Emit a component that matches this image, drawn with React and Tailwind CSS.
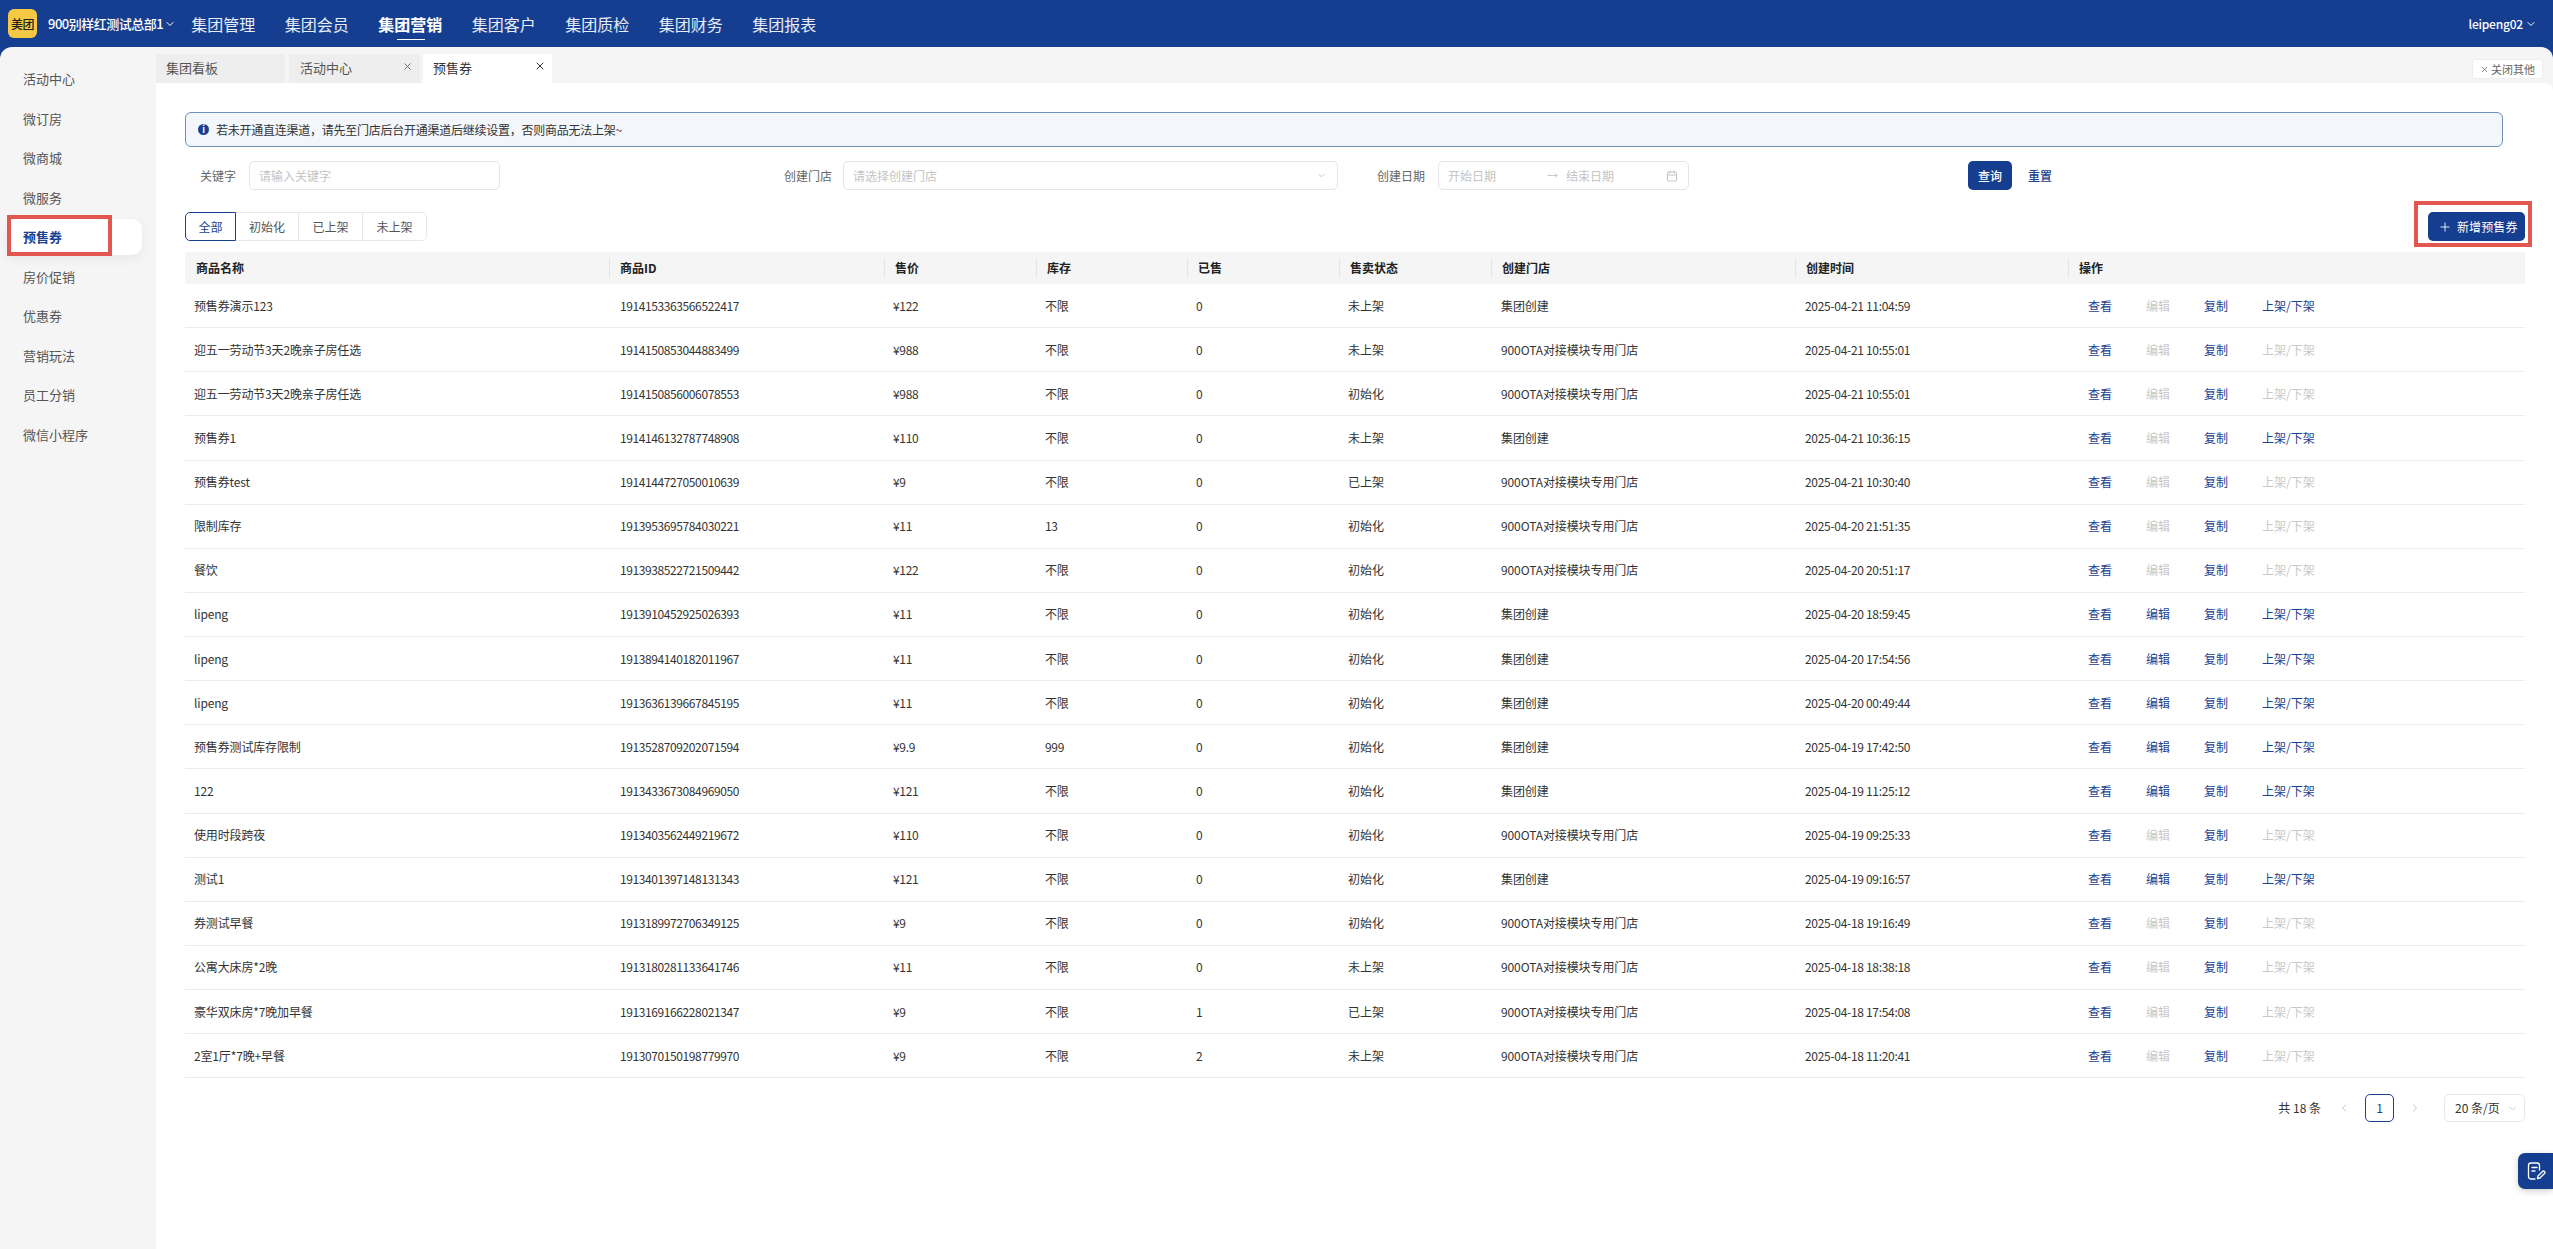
import React from "react";
import { ChevronDown, ChevronLeft, ChevronRight, X, Plus, Calendar, MoveRight } from "lucide-react";

const nav = ["集团管理", "集团会员", "集团营销", "集团客户", "集团质检", "集团财务", "集团报表"];
const side = ["活动中心", "微订房", "微商城", "微服务", "预售券", "房价促销", "优惠券", "营销玩法", "员工分销", "微信小程序"];
const G = "集团创建";
const O = "900OTA对接模块专用门店";
const rows = [
  ["预售券演示123", "1914153363566522417", "¥122", "不限", "0", "未上架", G, "2025-04-21 11:04:59", 0, 1],
  ["迎五一劳动节3天2晚亲子房任选", "1914150853044883499", "¥988", "不限", "0", "未上架", O, "2025-04-21 10:55:01", 0, 0],
  ["迎五一劳动节3天2晚亲子房任选", "1914150856006078553", "¥988", "不限", "0", "初始化", O, "2025-04-21 10:55:01", 0, 0],
  ["预售券1", "1914146132787748908", "¥110", "不限", "0", "未上架", G, "2025-04-21 10:36:15", 0, 1],
  ["预售券test", "1914144727050010639", "¥9", "不限", "0", "已上架", O, "2025-04-21 10:30:40", 0, 0],
  ["限制库存", "1913953695784030221", "¥11", "13", "0", "初始化", O, "2025-04-20 21:51:35", 0, 0],
  ["餐饮", "1913938522721509442", "¥122", "不限", "0", "初始化", O, "2025-04-20 20:51:17", 0, 0],
  ["lipeng", "1913910452925026393", "¥11", "不限", "0", "初始化", G, "2025-04-20 18:59:45", 1, 1],
  ["lipeng", "1913894140182011967", "¥11", "不限", "0", "初始化", G, "2025-04-20 17:54:56", 1, 1],
  ["lipeng", "1913636139667845195", "¥11", "不限", "0", "初始化", G, "2025-04-20 00:49:44", 1, 1],
  ["预售券测试库存限制", "1913528709202071594", "¥9.9", "999", "0", "初始化", G, "2025-04-19 17:42:50", 1, 1],
  ["122", "1913433673084969050", "¥121", "不限", "0", "初始化", G, "2025-04-19 11:25:12", 1, 1],
  ["使用时段跨夜", "1913403562449219672", "¥110", "不限", "0", "初始化", O, "2025-04-19 09:25:33", 0, 0],
  ["测试1", "1913401397148131343", "¥121", "不限", "0", "初始化", G, "2025-04-19 09:16:57", 1, 1],
  ["券测试早餐", "1913189972706349125", "¥9", "不限", "0", "初始化", O, "2025-04-18 19:16:49", 0, 0],
  ["公寓大床房*2晚", "1913180281133641746", "¥11", "不限", "0", "未上架", O, "2025-04-18 18:38:18", 0, 0],
  ["豪华双床房*7晚加早餐", "1913169166228021347", "¥9", "不限", "1", "已上架", O, "2025-04-18 17:54:08", 0, 0],
  ["2室1厅*7晚+早餐", "1913070150198779970", "¥9", "不限", "2", "未上架", O, "2025-04-18 11:20:41", 0, 0],
];
const heads = ["商品名称", "商品ID", "售价", "库存", "已售", "售卖状态", "创建门店", "创建时间", "操作"];
const cols = "grid grid-cols-[424px_275px_152px_151px_152px_152px_304px_273px_457px]";
const font = "[font-family:'Noto_Sans_CJK_SC','Microsoft_YaHei',sans-serif]";

function Act({ on, w, children }) {
  return <span className={`${w} ${on ? "text-[#1a4190]" : "text-[#c8c8c8]"}`}>{children}</span>;
}

export default function App() {
  return (
    <div className={`h-screen w-full overflow-hidden relative flex flex-col bg-[#153e90] text-[12px] text-[#333] ${font}`}>
      <header className="h-[47px] shrink-0 flex items-center pl-[8px] pr-[16px] text-white">
        <div className="w-[29px] h-[29px] rounded-[6px] bg-[#f6c944] flex items-center justify-center text-[#222] text-[12px] font-medium tracking-[-0.5px]">美团</div>
        <span className="ml-[11px] text-[13px] font-medium tracking-[-0.5px] whitespace-nowrap">900别样红测试总部1</span>
        <ChevronDown className="w-[12px] h-[12px] ml-[1px]" />
        <nav className="ml-[15px] flex gap-[29.5px]">
          {nav.map((n, i) => (
            <div key={n} className={`relative text-[16px] leading-[24px] ${i === 2 ? "font-bold" : "text-white/90"}`}>
              {n}
              {i === 2 && <div className="absolute left-[19px] w-[28px] h-[1.5px] top-[27px] bg-white" />}
            </div>
          ))}
        </nav>
        <div className="ml-auto flex items-center font-medium">
          <span className="tracking-[-0.2px]">leipeng02</span>
          <ChevronDown className="w-[12px] h-[12px] ml-[2px]" />
        </div>
      </header>

      <div className="flex-1 flex bg-[#f5f5f5] rounded-t-[12px] min-h-0">
        <aside className="w-[156px] shrink-0 pt-[12px]">
          {side.map((s, i) => (
            <div key={s} className="h-[39.56px] flex items-center text-[13px] text-[#555]">
              {i === 4 ? (
                <div className="relative ml-[8px] w-[134px] h-[36px] bg-white rounded-r-[10px] flex items-center pl-[15px] font-bold text-[#1a4190] shadow-[0_4px_12px_rgba(0,0,0,0.06)]">
                  {s}
                  <div className="absolute left-[-1.5px] top-[-4px] w-[105.5px] h-[41px] border-[4.5px] border-[#e2574f] pointer-events-none" />
                </div>
              ) : (
                <span className="pl-[23px]">{s}</span>
              )}
            </div>
          ))}
        </aside>

        <main className="flex-1 min-w-0 flex flex-col">
          <div className="h-[36px] shrink-0 pt-[7px] flex text-[13px] relative">
            <div className="w-[129px] bg-[#eeeeee] pl-[10px] leading-[28px] text-[#555]">集团看板</div>
            <div className="ml-[4px] w-[131px] bg-[#eeeeee] pl-[11px] leading-[28px] text-[#555] flex justify-between pr-[7px]">
              活动中心
              <X className="w-[11px] h-[11px] mt-[7px] text-[#666]" />
            </div>
            <div className="ml-[3px] w-[129px] bg-white pl-[10px] leading-[28px] text-[#333] flex justify-between pr-[6px]">
              预售券
              <X className="w-[12px] h-[12px] mt-[6px] text-[#333]" />
            </div>
            <div className="absolute right-[10px] top-[12px] h-[20px] w-[71px] bg-white border border-[#eeeeee] rounded-[3px] flex items-center justify-center text-[11px] text-[#666] gap-[2px]">
              <X className="w-[9px] h-[9px]" />
              关闭其他
            </div>
          </div>

          <div className="flex-1 bg-white rounded-tr-[8px] pl-[29px] pr-[28px] pt-[29px]">
            <div className="w-[2318px] h-[35px] rounded-[6px] border border-[#6f90b8] bg-[#f3f6fb] flex items-center pl-[12px] text-[#333]">
              <span className="w-[11px] h-[11px] rounded-full bg-[#1a4190] text-white text-[9px] leading-[11px] text-center font-bold">i</span>
              <span className="ml-[7px] tracking-[-0.25px]">若未开通直连渠道，请先至门店后台开通渠道后继续设置，否则商品无法上架~</span>
            </div>

            <div className="mt-[14px] h-[29px] flex items-center">
              <span className="ml-[15px] w-[36px] text-[#666]">关键字</span>
              <div className="ml-[13px] w-[251px] h-[29px] rounded-[5px] border border-[#e5e5e5] pl-[9px] flex items-center text-[#c4c4c4]">请输入关键字</div>
              <span className="ml-[284px] w-[48px] text-[#666]">创建门店</span>
              <div className="ml-[11px] w-[495px] h-[29px] rounded-[5px] border border-[#e5e5e5] pl-[9px] pr-[10px] flex items-center justify-between text-[#c4c4c4]">
                请选择创建门店
                <ChevronDown className="w-[11px] h-[11px]" />
              </div>
              <span className="ml-[39px] w-[48px] text-[#666]">创建日期</span>
              <div className="ml-[13px] w-[251px] h-[29px] rounded-[5px] border border-[#e5e5e5] pl-[9px] pr-[10px] flex items-center text-[#c4c4c4]">
                <span>开始日期</span>
                <MoveRight className="w-[11px] h-[11px] ml-[51px]" />
                <span className="ml-[8px]">结束日期</span>
                <Calendar className="w-[12px] h-[12px] ml-auto" />
              </div>
              <div className="ml-[279px] w-[44px] h-[29px] rounded-[5px] bg-[#153e90] text-white flex items-center justify-center font-medium">查询</div>
              <span className="ml-[16px] text-[#1a4190] font-medium">重置</span>
            </div>

            <div className="mt-[22px] h-[29px] flex items-center justify-between">
              <div className="flex h-[29px] text-[#555]">
                <div className="w-[51px] border border-[#1a4190] rounded-l-[5px] text-[#1a4190] flex items-center justify-center">全部</div>
                <div className="w-[63px] border-y border-r border-[#e8e8e8] flex items-center justify-center">初始化</div>
                <div className="w-[64px] border-y border-r border-[#e8e8e8] flex items-center justify-center">已上架</div>
                <div className="w-[64px] border-y border-r border-[#e8e8e8] rounded-r-[5px] flex items-center justify-center">未上架</div>
              </div>
              <div className="relative w-[97px] h-[29px] rounded-[5px] bg-[#153e90] text-white flex items-center pl-[10px] gap-[5px]">
                <Plus className="w-[14px] h-[14px]" strokeWidth={1.5} />
                <span className="tracking-[0.1px]">新增预售券</span>
                <div className="absolute left-[-14px] top-[-11px] w-[118px] h-[46px] border-[4.5px] border-[#e2574f] pointer-events-none" />
              </div>
            </div>

            <div className={`mt-[11px] h-[32px] ${cols} bg-[#f5f5f5] font-bold text-[#222]`}>
              {heads.map((h, i) => (
                <div key={h} className="flex items-center">
                  {i === 0 ? (
                    <span className="pl-[11px]">{h}</span>
                  ) : (
                    <div className="h-[20px] border-l border-[#e4e4e4] pl-[10px] flex items-center">{h}</div>
                  )}
                </div>
              ))}
            </div>

            {rows.map((r, idx) => (
              <div key={idx} className={`${cols} h-[44.14px] border-b border-[#ebebeb] items-center`}>
                <div className="pl-[9px] tracking-[-0.15px]">{r[0]}</div>
                <div className="pl-[11px] tracking-[-0.4px]">{r[1]}</div>
                <div className="pl-[9px] tracking-[-0.3px]">{r[2]}</div>
                <div className="pl-[9px] tracking-[-0.3px]">{r[3]}</div>
                <div className="pl-[9px]">{r[4]}</div>
                <div className="pl-[9px]">{r[5]}</div>
                <div className="pl-[10px] tracking-[-0.1px]">{r[6]}</div>
                <div className="pl-[10px] tracking-[-0.3px]">{r[7]}</div>
                <div className="pl-[20px] flex gap-[34px] whitespace-nowrap">
                  <Act on={1} w="w-[24px]">查看</Act>
                  <Act on={r[8]} w="w-[24px]">编辑</Act>
                  <Act on={1} w="w-[24px]">复制</Act>
                  <Act on={r[9]} w="">上架/下架</Act>
                </div>
              </div>
            ))}

            <div className="mt-[16px] h-[28px] flex items-center justify-end text-[#333]">
              <span className="text-[12px]">共 18 条</span>
              <ChevronLeft className="w-[12px] h-[12px] ml-[17px] text-[#c4c4c4]" />
              <div className="ml-[15px] w-[29px] h-[28px] rounded-[5px] border border-[#1a4190] flex items-center justify-center text-[#1a4190]">1</div>
              <ChevronRight className="w-[12px] h-[12px] ml-[15px] text-[#c4c4c4]" />
              <div className="ml-[23px] w-[81px] h-[28px] rounded-[5px] border border-[#e8e8e8] flex items-center justify-between pl-[10px] pr-[6px]">
                20 条/页
                <ChevronDown className="w-[11px] h-[11px] text-[#c4c4c4]" />
              </div>
            </div>
          </div>
        </main>
      </div>

      <div className="absolute right-0 top-[1153px] w-[35px] h-[36px] bg-[#153e90] rounded-l-[7px] flex items-center justify-center shadow-[0_2px_6px_rgba(0,0,0,0.2)]">
        <svg width="20" height="20" viewBox="0 0 20 20" fill="none" stroke="white" strokeWidth="1.3" strokeLinecap="round" strokeLinejoin="round">
          <path d="M9 18H5a2.5 2.5 0 0 1-2.5-2.5v-11A2.5 2.5 0 0 1 5 2h6a2.5 2.5 0 0 1 2.5 2.5V9" />
          <path d="M6 6.5h5M6 10h3" />
          <path d="M11.5 17.5l.5-2.5 4.5-4.5a1.3 1.3 0 0 1 2 2L14 17z" />
        </svg>
      </div>
    </div>
  );
}
